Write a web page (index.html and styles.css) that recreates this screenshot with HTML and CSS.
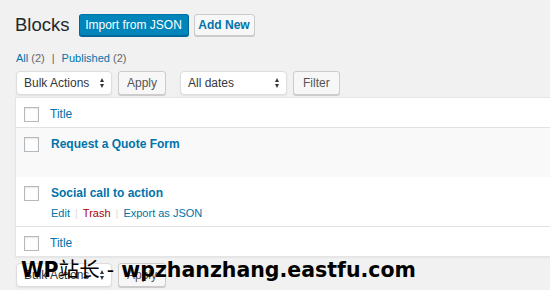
FILE: index.html
```html
<!DOCTYPE html>
<html lang="en">
<head>
  <meta charset="UTF-8" />
  <title>Blocks</title>
  <link rel="stylesheet" href="styles.css">
</head>
<body>
  <div class="wrap">
    <div class="page-head">
      <h1>Blocks</h1>
      <a class="btn btn-primary">Import from JSON</a>
      <a class="btn btn-add">Add New</a>
    </div>

    <ul class="subsubsub">
      <li><a>All</a> <span class="count">(2)</span></li>
      <li class="sep">|</li>
      <li><a>Published</a> <span class="count">(2)</span></li>
    </ul>

    <div class="tablenav">
      <div class="select select-bulk">Bulk Actions <span class="arrows"></span></div>
      <a class="btn btn-small btn-apply">Apply</a>
      <div class="select select-dates">All dates <span class="arrows"></span></div>
      <a class="btn btn-small">Filter</a>
    </div>

    <div class="list-table">
      <div class="row row-head">
        <span class="check"></span>
        <a class="col-title">Title</a>
      </div>
      <div class="row row-alt">
        <span class="check"></span>
        <div class="cell">
          <a class="row-title">Request a Quote Form</a>
        </div>
      </div>
      <div class="row">
        <span class="check"></span>
        <div class="cell">
          <a class="row-title">Social call to action</a>
          <div class="row-actions">
            <a>Edit</a><span class="sep">|</span><a class="trash">Trash</a><span class="sep">|</span><a>Export as JSON</a>
          </div>
        </div>
      </div>
      <div class="row row-foot">
        <span class="check"></span>
        <a class="col-title">Title</a>
      </div>
    </div>

    <div class="tablenav tablenav-bottom">
      <div class="select select-bulk">Bulk Actions <span class="arrows"></span></div>
      <a class="btn btn-small btn-apply">Apply</a>
    </div>
  </div>

  <div class="watermark">WP<span class="cjk">站长</span> <span class="dash">-</span> wpzhanzhang.eastfu.com</div>
</body>
</html>
```

FILE: styles.css
```css
html, body {
  margin: 0;
  overflow: hidden;
}

body {
  background: #f1f1f1;
  font-family: "Liberation Sans", Arial, sans-serif;
  font-size: 12px;
  color: #444;
  position: relative;
  height: 290px;
}

a {
  color: #0073aa;
  text-decoration: none;
}

.wrap {
  padding: 13px 0 0 15px;
}

.page-head {
  display: flex;
  align-items: center;
  gap: 5px;
}

h1 {
  margin: 0 4px 0 0;
  font-size: 18.5px;
  font-weight: 400;
  color: #23282d;
  line-height: 22px;
}

.btn {
  display: inline-flex;
  align-items: center;
  justify-content: center;
  box-sizing: border-box;
  border-radius: 3px;
  border: 1px solid #ccc;
  background: #f7f7f7;
  box-shadow: 0 1px 0 #ccc;
  font-size: 12px;
  white-space: nowrap;
}

.btn-primary {
  width: 110px;
  height: 22px;
  background: #0085ba;
  border-color: #0073aa #006799 #006799;
  box-shadow: 0 1px 0 #006799;
  color: #fff;
}

.btn-add {
  width: 61px;
  height: 22px;
  margin-top: 1px;
  font-weight: 700;
  color: #0073aa;
}

.subsubsub {
  list-style: none;
  margin: 16px 0 0 1px;
  padding: 0;
  display: flex;
  gap: 5px;
  font-size: 11px;
  color: #666;
}

.subsubsub .sep {
  margin: 0 2px;
  color: #666;
}

.tablenav {
  display: flex;
  align-items: center;
  gap: 6px;
  margin-top: 6px;
  height: 25px;
  margin-left: 1px;
}

.select {
  box-sizing: border-box;
  height: 24px;
  border: 1px solid #ddd;
  border-radius: 4px;
  background: #fff;
  box-shadow: 0 1px 2px rgba(0,0,0,0.07);
  display: flex;
  align-items: center;
  justify-content: space-between;
  padding: 0 6px 0 7px;
  color: #32373c;
  font-size: 12px;
}

.select-bulk {
  width: 96px;
}

.select-dates {
  width: 107px;
  margin-left: 8px;
}

.arrows {
  width: 5px;
  height: 10px;
  position: relative;
}

.arrows::before,
.arrows::after {
  content: "";
  position: absolute;
  left: 0;
  border-left: 2.5px solid transparent;
  border-right: 2.5px solid transparent;
}

.arrows::before {
  top: 0;
  border-bottom: 4px solid #32373c;
}

.arrows::after {
  bottom: 0;
  border-top: 4px solid #32373c;
}

.btn-small {
  height: 24px;
  padding: 0 9px;
  color: #555;
}

.btn-apply {
  width: 48px;
}

.list-table {
  margin-top: 2px;
  width: 545px;
  background: #fff;
  border: 1px solid #e5e5e5;
  border-right: none;
  box-shadow: 0 1px 1px rgba(0,0,0,0.04);
}

.row {
  display: flex;
  align-items: flex-start;
  min-height: 49px;
  box-sizing: border-box;
  padding-top: 8px;
}

.row-head {
  min-height: 30px;
  padding-top: 8px;
  border-bottom: 1px solid #e1e1e1;
}

.row-foot {
  min-height: 30px;
  padding-top: 8px;
  border-top: 1px solid #e1e1e1;
}

.row-alt {
  background: #f9f9f9;
}

.check {
  flex: none;
  width: 15px;
  height: 15px;
  box-sizing: border-box;
  margin: 1px 0 0 8px;
  border: 1px solid #b4b9be;
  background: #fff;
  box-shadow: inset 0 1px 2px rgba(0,0,0,0.1);
}

.col-title {
  margin-left: 11px;
  font-size: 12px;
  line-height: 16px;
}

.cell {
  margin-left: 12px;
}

.row-title {
  display: block;
  font-weight: 700;
  font-size: 12px;
  line-height: 16px;
}

.row-actions {
  margin-top: 4px;
  font-size: 11px;
  line-height: 16px;
}

.row-actions .sep {
  color: #ddd;
  margin: 0 5px;
}

.row-actions .trash {
  color: #a00;
}

.tablenav-bottom {
  margin-top: 5px;
}

.watermark {
  position: absolute;
  left: 21px;
  top: 253px;
  font-family: "DejaVu Sans", "Noto Sans CJK SC", sans-serif;
  font-weight: 700;
  font-size: 20.5px;
  color: #000;
  white-space: nowrap;
}

.watermark .cjk {
  font-family: "Noto Sans CJK SC", sans-serif;
  font-weight: 400;
}

.watermark .dash {
  font-weight: 400;
}
```
